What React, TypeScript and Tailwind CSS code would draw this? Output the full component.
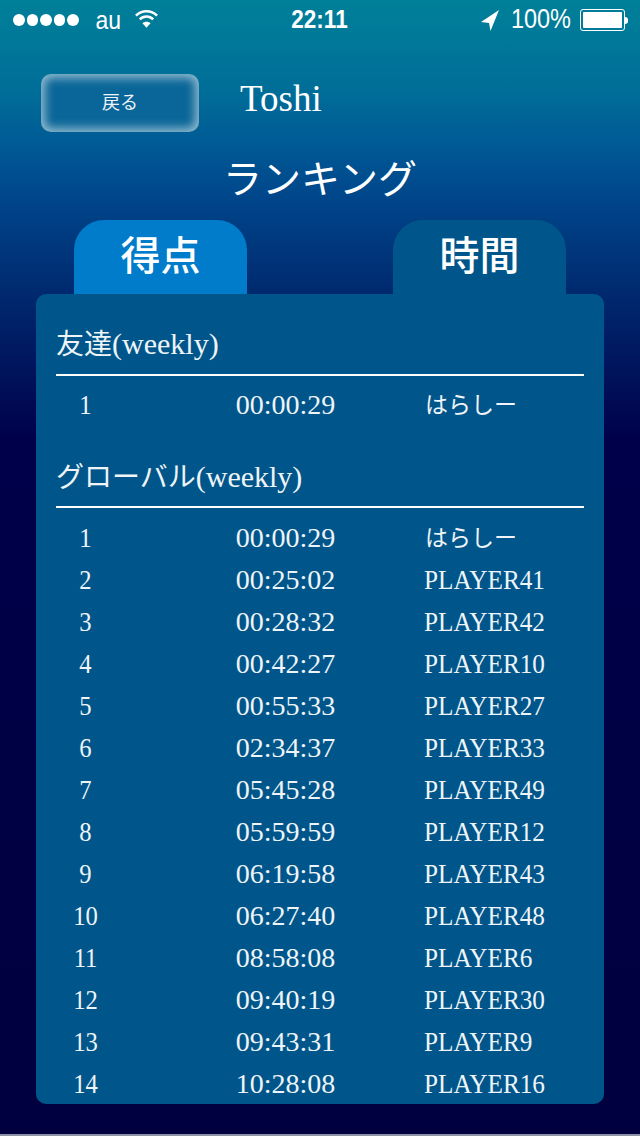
import React from "react";

const friends = [{ rank: 1, time: "00:00:29", name: "はらしー" }];

const globalRows = [
  { rank: 1, time: "00:00:29", name: "はらしー" },
  { rank: 2, time: "00:25:02", name: "PLAYER41" },
  { rank: 3, time: "00:28:32", name: "PLAYER42" },
  { rank: 4, time: "00:42:27", name: "PLAYER10" },
  { rank: 5, time: "00:55:33", name: "PLAYER27" },
  { rank: 6, time: "02:34:37", name: "PLAYER33" },
  { rank: 7, time: "05:45:28", name: "PLAYER49" },
  { rank: 8, time: "05:59:59", name: "PLAYER12" },
  { rank: 9, time: "06:19:58", name: "PLAYER43" },
  { rank: 10, time: "06:27:40", name: "PLAYER48" },
  { rank: 11, time: "08:58:08", name: "PLAYER6" },
  { rank: 12, time: "09:40:19", name: "PLAYER30" },
  { rank: 13, time: "09:43:31", name: "PLAYER9" },
  { rank: 14, time: "10:28:08", name: "PLAYER16" },
];

type Row = { rank: number; time: string; name: string };

function Rows({ rows }: { rows: Row[] }) {
  return (
    <div className="flex flex-col">
      {rows.map((r) => (
        <div key={r.rank} className="flex h-[42px] items-center text-[28px] leading-[42px] text-[#eef4f8]">
          <div className="w-[59px] scale-x-[0.88] text-center">{r.rank}</div>
          <div className="ml-[111px] w-[119px] text-center">{r.time}</div>
          <div className="ml-[79px]">
            {r.name.startsWith("PLAYER") ? (
              <span className="inline-block origin-left scale-x-[0.9]">{r.name}</span>
            ) : (
              <span className="ml-[1px] text-[23px]">{r.name}</span>
            )}
          </div>
        </div>
      ))}
    </div>
  );
}

function StatusBar() {
  return (
    <div className="flex h-10 items-center justify-between pl-[13px] pr-[12px] font-['Liberation_Sans',sans-serif] text-white">
      <div className="flex w-[220px] items-center">
        <div className="flex gap-[2px]">
          {[0, 1, 2, 3, 4].map((i) => (
            <span key={i} className="h-[12px] w-[11.5px] rounded-full bg-white" />
          ))}
        </div>
        <span className="ml-[17px] scale-y-[1.15] text-[23px] leading-none">au</span>
        <svg className="ml-[13px] -mt-[3px]" width="25" height="22" viewBox="0 0 26 22" fill="none" stroke="white" strokeWidth="2.6">
          <path d="M2 7.5 C8 1.5 18 1.5 24 7.5" />
          <path d="M6 11.5 C10 7.5 16 7.5 20 11.5" />
          <path d="M13 20 L8.8 15.5 C11 13.4 15 13.4 17.2 15.5 Z" fill="white" stroke="none" />
        </svg>
      </div>
      <span className="ml-[-2px] scale-y-[1.15] text-[22.5px] font-semibold leading-none">22:11</span>
      <div className="flex w-[220px] items-center justify-end">
        <svg className="mr-[12px]" width="18" height="21" viewBox="0 0 18 21" fill="white">
          <path d="M18 0 L0 12 L8 13 L9.5 21 Z" />
        </svg>
        <span className="scale-y-[1.15] text-[23.5px] leading-none">100%</span>
        <div className="ml-[9px] flex items-center">
          <div className="h-[22px] w-[45px] rounded-[3px] border border-white p-[2px]">
            <div className="h-full w-full rounded-[1px] bg-white" />
          </div>
          <div className="h-[7px] w-[3px] rounded-r-full bg-white" />
        </div>
      </div>
    </div>
  );
}

export default function App() {
  return (
    <div className="flex h-[1136px] w-[640px] flex-col overflow-hidden border-b-2 border-[#8f93a8] bg-[linear-gradient(to_bottom,#008099_0px,#006e98_90px,#005b96_140px,#00458a_200px,#002a70_290px,#00004a_440px,#00003f_1136px)] font-['Liberation_Serif','Noto_Sans_CJK_JP',serif] text-white">
      <StatusBar />

      {/* header with back button */}
      <div className="mt-[34px] flex items-start pl-[41px]">
        <button className="flex h-[58px] w-[158px] items-center justify-center rounded-[10px] bg-[#0a6698] text-[18px] text-[#eef4f8] shadow-[inset_0_0_10px_4px_rgba(190,215,225,0.75)]">
          戻る
        </button>
        <div className="ml-[41px] mt-[3px] text-[37px] leading-[44px]">Toshi</div>
      </div>

      <h1 className="mt-[23px] text-center text-[39px] font-normal leading-[50px]">ランキング</h1>

      {/* tabs */}
      <div className="mt-[15px] flex justify-between px-[74px]">
        <div className="flex h-[74px] w-[173px] justify-center rounded-t-[30px] bg-[#007ccb] pt-[10px] text-[40px] font-medium leading-[54px]">
          得点
        </div>
        <div className="flex h-[74px] w-[173px] justify-center rounded-t-[30px] bg-[#00568a] pt-[10px] text-[40px] font-medium leading-[54px]">
          時間
        </div>
      </div>

      {/* ranking panel */}
      <div className="mx-[36px] h-[810px] rounded-[10px] bg-[#00568a] px-[20px]">
        <div className="mt-[28px] border-b-2 border-white pb-[7px] text-[28px] leading-[44px] text-[#eef4f8]">
          友達<span className="text-[30px]">(weekly)</span>
        </div>
        <div className="mt-[8px]">
          <Rows rows={friends} />
        </div>
        <div className="mt-[29px] border-b-2 border-white pb-[6px] text-[28px] leading-[44px] text-[#eef4f8]">
          グローバル<span className="text-[30px]">(weekly)</span>
        </div>
        <div className="mt-[9px]">
          <Rows rows={globalRows} />
        </div>
      </div>
    </div>
  );
}
